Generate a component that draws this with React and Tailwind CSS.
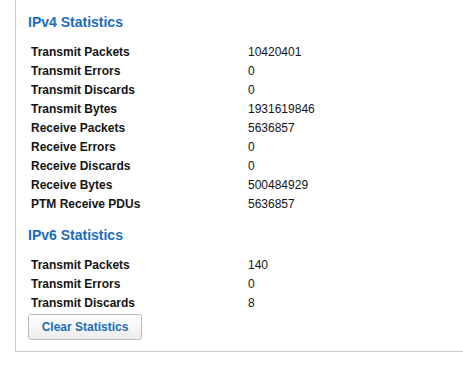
import React from 'react';

const ipv4 = [
  ['Transmit Packets', '10420401'],
  ['Transmit Errors', '0'],
  ['Transmit Discards', '0'],
  ['Transmit Bytes', '1931619846'],
  ['Receive Packets', '5636857'],
  ['Receive Errors', '0'],
  ['Receive Discards', '0'],
  ['Receive Bytes', '500484929'],
  ['PTM Receive PDUs', '5636857'],
];

const ipv6 = [
  ['Transmit Packets', '140'],
  ['Transmit Errors', '0'],
  ['Transmit Discards', '8'],
];

function StatRows({ rows }) {
  return (
    <div className="pl-[3px]">
      {rows.map(([label, value]) => (
        <div key={label} className="flex h-[19px] items-center text-[12px] leading-[19px] text-[#141414]">
          <span className="w-[217px] font-bold">{label}</span>
          <span>{value}</span>
        </div>
      ))}
    </div>
  );
}

export default function App() {
  return (
    <div className="min-h-[366px] bg-white font-['Liberation_Sans',Arial,sans-serif]">
      <div className="ml-[15px] border-b border-l border-[#cccccc] pb-[11px] pl-[12px] pt-[14px]">
        <h2 className="text-[14px] font-bold leading-[16px] text-[#1b6dbd]">IPv4 Statistics</h2>
        <div className="mt-[13px]">
          <StatRows rows={ipv4} />
        </div>
        <h2 className="mt-[13px] text-[14px] font-bold leading-[16px] text-[#1b6dbd]">IPv6 Statistics</h2>
        <div className="mt-[13px]">
          <StatRows rows={ipv6} />
        </div>
        <button
          type="button"
          className="mt-[1px] h-[26px] w-[114px] rounded-[3px] border border-[#bbbbbb] bg-gradient-to-b from-white to-[#ececec] text-[12px] font-bold text-[#1b6dbd]"
        >
          Clear Statistics
        </button>
      </div>
    </div>
  );
}
